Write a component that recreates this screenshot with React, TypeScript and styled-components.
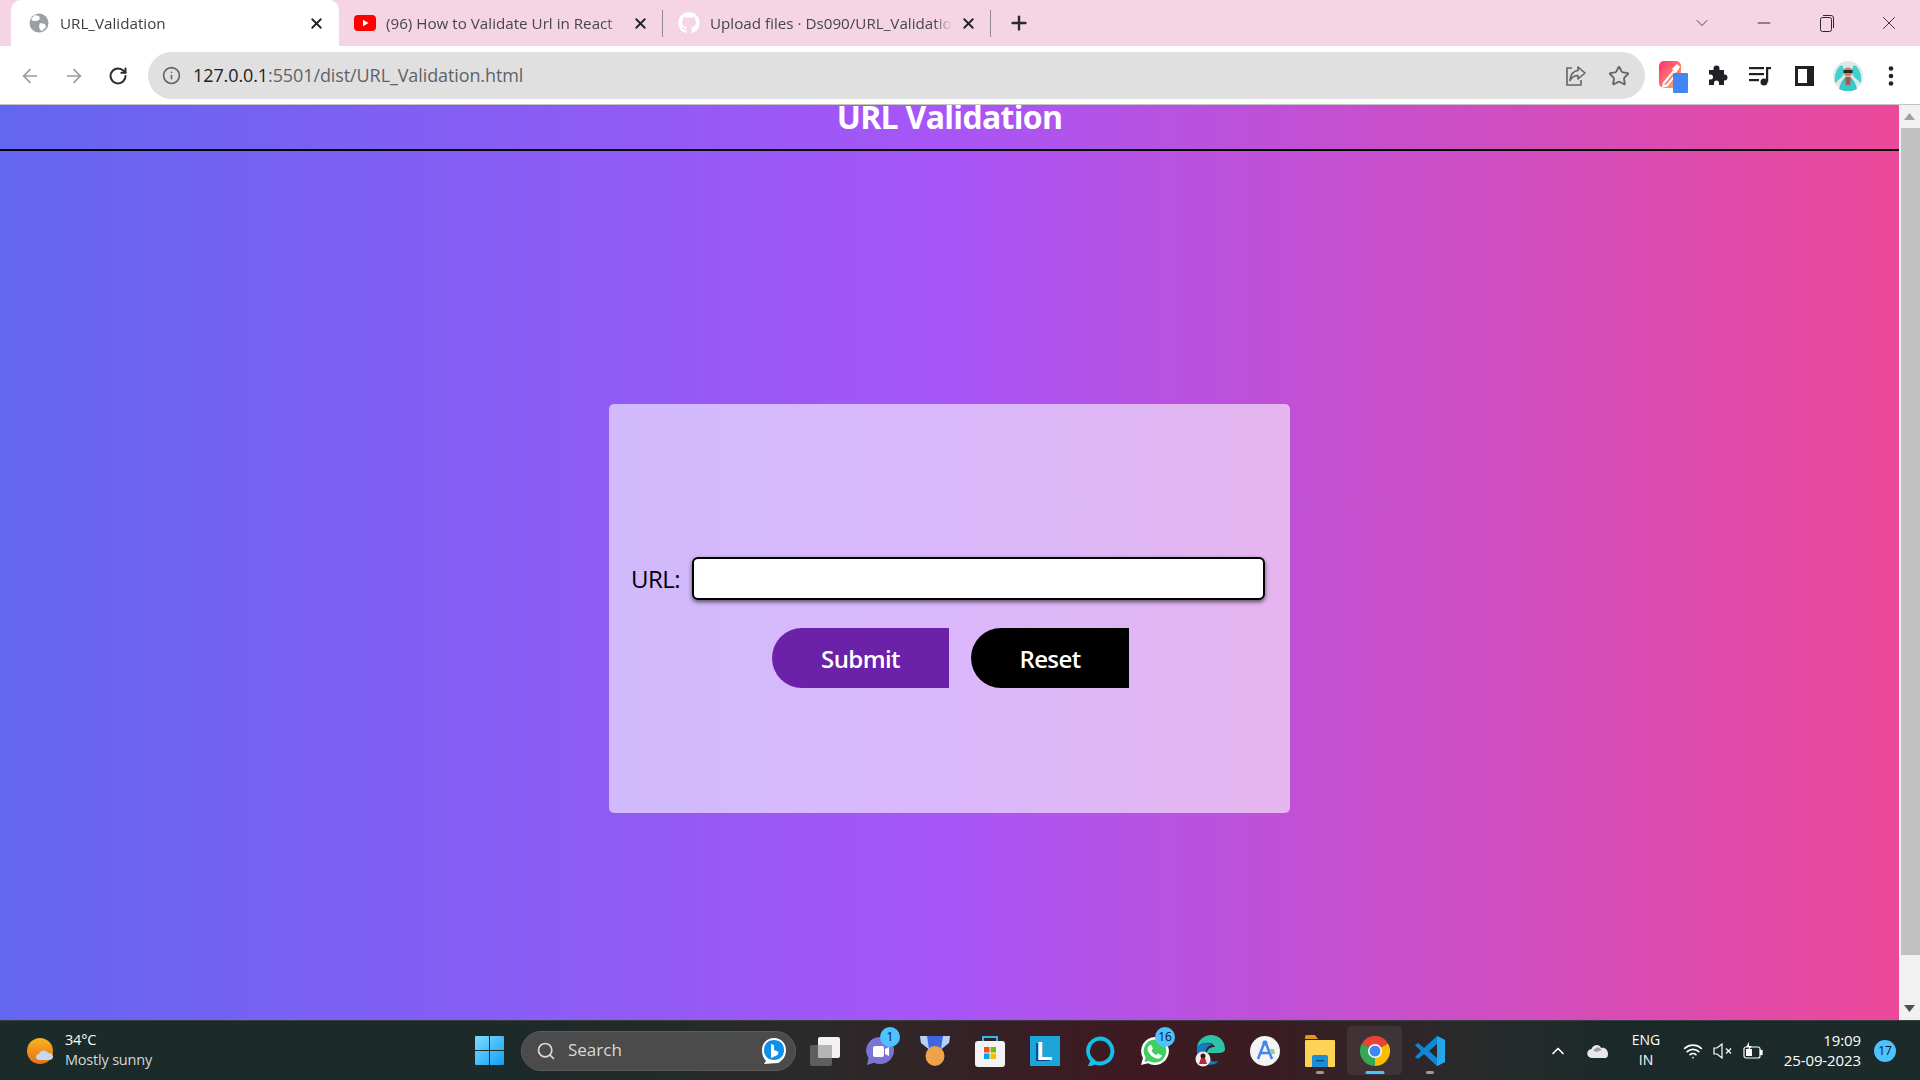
import React from "react";
import styled, { createGlobalStyle } from "styled-components";
import { ArrowLeft, ArrowRight, RotateCw, Info, Star, X, Plus, ChevronDown, ChevronUp, Minus, Search, Wifi } from "lucide-react";
import { FaGithub } from "react-icons/fa";

const UI_FONT = `"Open Sans", "Noto Sans", "Liberation Sans", sans-serif`;

const GlobalStyle = createGlobalStyle`
  html, body {
    margin: 0;
    padding: 0;
    height: 100%;
    overflow: hidden;
    font-family: ${UI_FONT};
  }
  * {
    box-sizing: border-box;
  }
`;

const Screen = styled.div`
  width: 1920px;
  height: 1080px;
  display: flex;
  flex-direction: column;
  overflow: hidden;
`;

/* browser chrome */
const TabStrip = styled.div`
  height: 46px;
  flex: none;
  background: #f5d5e3;
  display: flex;
  align-items: stretch;
  padding-left: 11px;
`;

const Tab = styled.div<{ $active?: boolean; $width: number; $sep?: boolean }>`
  width: ${(p) => p.$width}px;
  position: relative;
  display: flex;
  align-items: center;
  padding: 0 14px 0 ${(p) => (p.$active ? 17 : 15)}px;
  background: ${(p) => (p.$active ? "#fff" : "transparent")};
  border-radius: ${(p) => (p.$active ? "10px 10px 0 0" : "0")};
  color: ${(p) => (p.$active ? "#3c4043" : "#45474a")};

  ${(p) =>
    p.$sep &&
    `&::after {
      content: "";
      position: absolute;
      right: 0;
      top: 10px;
      height: 27px;
      width: 1px;
      background: #8f8a8d;
    }`}
`;

const TabIcon = styled.span`
  width: 22px;
  height: 22px;
  flex: none;
  display: flex;
  align-items: center;
  justify-content: center;
  margin-right: 10px;
`;

const TabTitle = styled.span`
  flex: 1;
  font-size: 15.2px;
  line-height: 20px;
  margin-top: -1px;
  white-space: nowrap;
  overflow: hidden;
  mask-image: linear-gradient(to right, #000 calc(100% - 18px), transparent);
`;

const TabClose = styled.span`
  flex: none;
  margin-left: 8px;
  display: flex;
  color: #202124;
`;

const NewTab = styled.span`
  display: flex;
  align-items: center;
  margin-left: 17px;
  color: #2b2b2b;
`;

const WindowControls = styled.div`
  margin-left: auto;
  display: flex;
  align-items: center;
  color: #2a2a2a;
`;

const WindowButton = styled.span<{ $width: number }>`
  width: ${(p) => p.$width}px;
  display: flex;
  justify-content: center;
`;

const Toolbar = styled.div`
  height: 59px;
  flex: none;
  background: #fff;
  border-bottom: 1px solid #c4c4c4;
  display: flex;
  align-items: flex-start;
  padding: 6px 0 0 18px;
`;

const NavButton = styled.span<{ $muted?: boolean; $gap?: number }>`
  width: 24px;
  height: 47px;
  display: flex;
  align-items: center;
  justify-content: center;
  margin-right: ${(p) => p.$gap ?? 20}px;
  color: ${(p) => (p.$muted ? "#9a9a9a" : "#2b2b2b")};
`;

const AddressBar = styled.div`
  width: 1497px;
  height: 47px;
  border-radius: 24px;
  background: #e0e0e0;
  display: flex;
  align-items: center;
  padding: 0 15px 0 14px;
  color: #5f6368;
`;

const Url = styled.div`
  flex: 1;
  margin-left: 12px;
  margin-top: -2px;
  font-size: 18px;
  letter-spacing: -0.1px;
  color: #5f6368;

  b {
    font-weight: 400;
    color: #202124;
  }
`;

const BarAction = styled.span<{ $gap?: number }>`
  display: flex;
  margin-left: ${(p) => p.$gap ?? 0}px;
  color: #646464;
`;

const Extensions = styled.div`
  display: flex;
  align-items: center;
  height: 47px;
  margin-left: 14px;
`;

const ExtensionSlot = styled.span<{ $width: number }>`
  width: ${(p) => p.$width}px;
  display: flex;
  justify-content: center;
  color: #202124;
`;

/* page */
const Viewport = styled.div`
  flex: 1;
  min-height: 0;
  display: flex;
`;

const Page = styled.main`
  flex: 1;
  min-width: 0;
  overflow: hidden;
  background: linear-gradient(to right, #6366f1, #a855f7, #ec4899);
`;

const PageHeader = styled.header`
  height: 46px;
  border-bottom: 2px solid #000;
  overflow: hidden;
`;

const Heading = styled.h1`
  margin: -8px 0 0;
  text-align: center;
  color: #fff;
  font-size: 32px;
  line-height: 40px;
  font-weight: 700;
  letter-spacing: -0.7px;
`;

const FormArea = styled.section`
  display: flex;
  justify-content: center;
  padding-top: 253px;
`;

const FormCard = styled.form`
  width: 681px;
  height: 409px;
  background: rgba(255, 255, 255, 0.58);
  border-radius: 5px;
  padding: 153px 25px 0 22px;
`;

const UrlRow = styled.div`
  display: flex;
  align-items: center;
  gap: 12px;
`;

const UrlLabel = styled.label`
  font-size: 24px;
  letter-spacing: -0.5px;
  color: #000;
`;

const UrlInput = styled.input`
  flex: 1;
  height: 43px;
  border: 2px solid #000;
  border-radius: 6px;
  background: #fff;
  box-shadow: 0 2px 4px rgba(0, 0, 0, 0.6);
  outline: none;
`;

const ButtonRow = styled.div`
  display: flex;
  gap: 22px;
  margin-top: 28px;
  padding-left: 141px;
`;

const ActionButton = styled.button<{ $bg: string; $width: number }>`
  width: ${(p) => p.$width}px;
  height: 60px;
  border: 0;
  border-radius: 30px 0 0 30px;
  background: ${(p) => p.$bg};
  color: #fff;
  font-family: ${UI_FONT};
  font-size: 24px;
  font-weight: 600;
  letter-spacing: -0.6px;
  cursor: pointer;
`;

const Scrollbar = styled.div`
  width: 21px;
  flex: none;
  background: #f1f1f1;
  display: flex;
  flex-direction: column;
`;

const ScrollArrow = styled.div`
  height: 23px;
  flex: none;
  display: flex;
  align-items: center;
  justify-content: center;

  svg {
    display: block;
  }
`;

const ScrollThumb = styled.div`
  height: 827px;
  margin-left: 2px;
  background: #c1c1c1;
`;

const ScrollTrack = styled.div`
  flex: 1;
`;

/* taskbar */
const Taskbar = styled.footer`
  height: 60px;
  flex: none;
  border-top: 1px solid #3a3f44;
  background: linear-gradient(
    to right,
    #1b2b29 0,
    #1c2a29 27%,
    #2a2a2a 42%,
    #3e1a22 58%,
    #3a1c22 66%,
    #2a2a2b 76%,
    #1b2a29 84%,
    #1b2b29 100%
  );
  display: flex;
  align-items: center;
  color: #fff;
`;

const Weather = styled.div`
  width: 464px;
  display: flex;
  align-items: center;
  padding-left: 27px;
  gap: 8px;
`;

const WeatherText = styled.div`
  font-size: 14.5px;
  line-height: 20px;
  letter-spacing: -0.2px;
  margin-top: -2px;

  small {
    display: block;
    font-size: 14.5px;
    color: #d3d8d7;
  }
`;

const StartButton = styled.span`
  width: 57px;
  display: flex;
  padding-left: 11px;
`;

const SearchBox = styled.div`
  width: 275px;
  height: 40px;
  border-radius: 20px;
  background: #4a4b4a;
  border: 1px solid #5b5c5b;
  display: flex;
  align-items: center;
  padding: 0 8px 0 14px;
  gap: 12px;
  color: #d9d9d9;
  font-size: 17px;
  margin-right: 1px;
`;

const SearchLabel = styled.span`
  flex: 1;
  margin-top: -2px;
`;

const AppIcons = styled.div`
  display: flex;
  align-items: center;
  height: 100%;
`;

const AppSlot = styled.span<{ $active?: boolean }>`
  width: 55px;
  height: 49px;
  position: relative;
  display: flex;
  align-items: center;
  justify-content: center;
  border-radius: 5px;
  background: ${(p) => (p.$active ? "rgba(255,255,255,0.07)" : "transparent")};
`;

const AppBadge = styled.span`
  position: absolute;
  top: 1px;
  right: 7px;
  min-width: 20px;
  height: 20px;
  border-radius: 10px;
  background: #4cc2ff;
  color: #111;
  font-size: 12px;
  line-height: 20px;
  text-align: center;
`;

const RunningDot = styled.span<{ $wide?: boolean }>`
  position: absolute;
  bottom: 1px;
  left: 50%;
  transform: translateX(-50%);
  width: ${(p) => (p.$wide ? 19 : 8)}px;
  height: 3px;
  border-radius: 2px;
  background: ${(p) => (p.$wide ? "#4cc2ff" : "#9a9a9a")};
`;

const Tray = styled.div`
  margin-left: auto;
  display: flex;
  align-items: center;
`;

const TrayIcon = styled.span<{ $width: number }>`
  width: ${(p) => p.$width}px;
  display: flex;
  justify-content: center;
`;

const Lang = styled.div`
  width: 62px;
  text-align: center;
  font-size: 14px;
  line-height: 20px;
  margin-top: -1px;
`;

const Clock = styled.div`
  width: 92px;
  text-align: right;
  font-size: 15px;
  line-height: 20px;
  letter-spacing: -0.1px;
  margin-top: -1px;
`;

const NotifyBadge = styled.span`
  width: 22px;
  height: 22px;
  margin: 0 24px 0 13px;
  border-radius: 50%;
  background: #4cc2ff;
  color: #111;
  font-size: 12px;
  line-height: 22px;
  text-align: center;
`;

/* drawn icons */
const GlobeIcon = () => (
  <svg width="20" height="20" viewBox="0 0 20 20">
    <circle cx="10" cy="10" r="9.5" fill="#9aa0a6" />
    <path d="M6 2l4 1 1 3-3 2-4 0-2-2zM11 10l5 1 1 3-4 4-2-1-1-4z" fill="#fff" />
  </svg>
);

const YoutubeIcon = () => (
  <svg width="22" height="16" viewBox="0 0 22 16">
    <rect width="22" height="16" rx="4" fill="#f00" />
    <path d="M9 4.7L14.6 8 9 11.3z" fill="#fff" />
  </svg>
);

const ShareIcon = () => (
  <svg width="22" height="22" viewBox="0 0 22 22" fill="none" stroke="currentColor" strokeWidth="1.6">
    <path d="M7 3H2v17h14v-5" />
    <path d="M13 2l7 6-7 6v-3.500c-4 0-6 1.500-8 5 .5-6 3-9.500 8-10z" strokeLinejoin="round" />
  </svg>
);

const DropperIcon = () => (
  <svg width="30" height="34" viewBox="0 0 30 34">
    <defs>
      <linearGradient id="dropper" x1="0" y1="0" x2="1" y2="1">
        <stop offset="0" stopColor="#ff2d6f" />
        <stop offset="1" stopColor="#ffb36b" />
      </linearGradient>
    </defs>
    <rect x="0" y="2" width="22" height="27" rx="5" fill="url(#dropper)" />
    <path d="M5 24l9-11 3 2.500-9 11-4 1z" fill="none" stroke="#fff" strokeWidth="2" />
    <path d="M13 10l5-5 3 3-4 6z" fill="#fff" />
    <rect x="14" y="14" width="15" height="20" rx="1" fill="#4285f4" />
  </svg>
);

const PuzzleIcon = () => (
  <svg width="21" height="21" viewBox="0 0 21 21" fill="#202124">
    <path d="M2 5h4.500V3.500a3 3 0 0 1 6 0V5H17v4.500h.5a3 3 0 0 1 0 6H17V20h-5v-2a2.500 2.500 0 0 0-5 0v2H2v-5.500h1.500a2.500 2.500 0 0 0 0-5H2z" />
  </svg>
);

const QueueIcon = () => (
  <svg width="22" height="22" viewBox="0 0 22 22" fill="#202124">
    <rect x="0" y="2" width="15" height="2.200" />
    <rect x="0" y="8" width="15" height="2.200" />
    <rect x="0" y="14" width="10" height="2.200" />
    <circle cx="15" cy="17" r="3.500" />
    <rect x="17" y="2" width="2.200" height="15" />
    <rect x="17" y="2" width="5" height="2.200" />
  </svg>
);

const SidePanelIcon = () => (
  <svg width="19" height="20" viewBox="0 0 19 20">
    <rect x="1.500" y="1.500" width="16" height="17" fill="#fff" stroke="#202124" strokeWidth="3" />
    <rect x="12" y="1" width="6" height="18" fill="#202124" />
  </svg>
);

const AvatarIcon = () => (
  <svg width="30" height="30" viewBox="0 0 30 30">
    <circle cx="15" cy="15" r="15" fill="#dfe8e6" />
    <path d="M2 22C1 14 4 6 9 4l3 6-3 6zM28 22c1-8-2-16-7-18l-3 6 3 6z" fill="#3fd0d0" />
    <path d="M6 28c2-8 5-12 9-12s7 4 9 12c-5 3-13 3-18 0z" fill="#37c8c8" />
    <circle cx="15" cy="11" r="4.500" fill="#c77f66" />
    <rect x="10.500" y="9" width="9" height="3" fill="#2a2a2a" />
    <path d="M12 16h6l-1 8h-4z" fill="#b0574c" />
  </svg>
);

const MenuDots = () => (
  <svg width="6" height="22" viewBox="0 0 6 22" fill="#202124">
    <circle cx="3" cy="3.500" r="2.300" />
    <circle cx="3" cy="11" r="2.300" />
    <circle cx="3" cy="18.500" r="2.300" />
  </svg>
);

const RestoreIcon = () => (
  <svg width="14" height="17" viewBox="0 0 14 17" fill="none" stroke="currentColor" strokeWidth="1">
    <rect x="0.500" y="2.500" width="11" height="14" rx="2" />
    <path d="M3 0.500h8a2.500 2.500 0 0 1 2.500 2.500v10" />
  </svg>
);

const SunCloudIcon = () => (
  <svg width="30" height="30" viewBox="0 0 30 30">
    <defs>
      <linearGradient id="sun" x1="0" y1="0" x2="0" y2="1">
        <stop offset="0" stopColor="#f7b422" />
        <stop offset="1" stopColor="#ea6f14" />
      </linearGradient>
    </defs>
    <circle cx="13" cy="15" r="13" fill="url(#sun)" />
    <path d="M12 24c-4 0-4-6 0-6 1-4 7-5 9-1 6-1 7 7 1 7z" fill="#c6d7f2" />
  </svg>
);

const WindowsIcon = () => (
  <svg width="29" height="29" viewBox="0 0 29 29">
    <defs>
      <linearGradient id="win" x1="0" y1="0" x2="1" y2="1">
        <stop offset="0" stopColor="#7fdcff" />
        <stop offset="1" stopColor="#0f9ff5" />
      </linearGradient>
    </defs>
    <path d="M0 1a1 1 0 0 1 1-1h13v14H0zM15 0h13a1 1 0 0 1 1 1v13H15zM0 15h14v14H1a1 1 0 0 1-1-1zM15 15h14v13a1 1 0 0 1-1 1H15z" fill="url(#win)" />
  </svg>
);

const BingIcon = () => (
  <svg width="26" height="28" viewBox="0 0 26 28">
    <path d="M13 1c7 0 12 5 12 12s-4 11-8 13l-14 1 2-3C2 21 1 17 1 13 1 6 6 1 13 1z" fill="#fff" />
    <path d="M13 3c6 0 10 4 10 10s-4 10-10 10S3 19 3 13 7 3 13 3z" fill="#0f8fe8" />
    <path d="M10 7l3 1v5l4 1.500c1 1.500 0 4-2.500 4.500L10 21z" fill="#fff" />
  </svg>
);

const TaskViewIcon = () => (
  <svg width="30" height="30" viewBox="0 0 30 30">
    <rect x="0" y="9" width="22" height="21" rx="2" fill="#5e5e5e" />
    <rect x="8" y="1" width="22" height="21" rx="2" fill="#f2f2f2" />
    <rect x="8" y="9" width="14" height="13" fill="#b5b5b5" />
  </svg>
);

const ChatIcon = () => (
  <svg width="30" height="30" viewBox="0 0 30 30">
    <path d="M15 1a14 13.500 0 1 1-6 25.700L2 29l1.500-7A14 13.500 0 0 1 15 1z" fill="#7b74d6" />
    <rect x="8" y="10" width="11" height="11" rx="2" fill="#fff" />
    <path d="M20 13l4-2v9l-4-2z" fill="#fff" />
  </svg>
);

const MedalIcon = () => (
  <svg width="30" height="30" viewBox="0 0 30 30">
    <path d="M0 0h30l-1 7-7 6H8L1 7z" fill="#3f68e0" />
    <path d="M0 0h7l2 13-8-6zM30 0h-7l-2 13 8-6z" fill="#b9d0f5" />
    <ellipse cx="15" cy="20" rx="9.500" ry="10" fill="#f0a24a" />
  </svg>
);

const StoreIcon = () => (
  <svg width="30" height="32" viewBox="0 0 30 32">
    <path d="M8 6V2h14v4" fill="none" stroke="#35b6e8" strokeWidth="2" />
    <rect x="0" y="6" width="30" height="26" rx="3" fill="#f3f3f3" />
    <rect x="9" y="12" width="5.500" height="5.500" fill="#f25022" />
    <rect x="15.500" y="12" width="5.500" height="5.500" fill="#7fba00" />
    <rect x="9" y="18.500" width="5.500" height="5.500" fill="#00a4ef" />
    <rect x="15.500" y="18.500" width="5.500" height="5.500" fill="#ffb900" />
  </svg>
);

const LetterTile = styled.span`
  width: 30px;
  height: 30px;
  background: #1ba5d8;
  color: #fff;
  font-family: "Liberation Sans", sans-serif;
  font-size: 26px;
  font-weight: 700;
  line-height: 30px;
  text-align: center;
  text-shadow: -2px 1px 0 #123a8c;
`;

const AlexaIcon = () => (
  <svg width="30" height="30" viewBox="0 0 30 30">
    <path d="M15 2.500a12.500 12.500 0 1 1-5 24l-4 1.500 1.500-3.500A12.500 12.500 0 0 1 15 2.500z" fill="none" stroke="#13bfe6" strokeWidth="4" />
  </svg>
);

const WhatsappIcon = () => (
  <svg width="30" height="32" viewBox="0 0 30 32">
    <path d="M15 2a14 14 0 1 1-7 26.200L1 30l2-7A14 14 0 0 1 15 2z" fill="#fff" />
    <path d="M15 4.500a11.500 11.500 0 1 1-6 21.400L4.500 27l1.200-4.500A11.500 11.500 0 0 1 15 4.500z" fill="#3fcf5f" />
    <path d="M11 9.500l2 4-1.500 2c1 2 2.500 3.500 4.500 4.500l2-1.500 4 2c-.5 2.500-3 3.500-5 3-5-1-8.500-5-9.500-9 0-2.500 1.500-4.500 3.500-5z" fill="#fff" />
  </svg>
);

const EdgeIcon = () => (
  <svg width="30" height="32" viewBox="0 0 30 32">
    <path d="M2 12C3 5 9 0 16 0c8 0 14 6 14 14 0 3-3 4-7 4H12c0-5 5-6 8-6-2-5-12-6-18 0z" fill="#2bc3a8" />
    <path d="M2 12c4-5 12-5 15-2-5 1-7 5-6 9 1 6 7 9 13 7-3 4-10 5-15 2-5-3-8-9-7-16z" fill="#0f7cc4" />
    <circle cx="8" cy="24" r="7.500" fill="#f3ece4" />
    <circle cx="8" cy="21" r="2.500" fill="#222" />
    <path d="M4 29l2-6h4l2 6z" fill="#b52a38" />
  </svg>
);

const AndroidStudioIcon = () => (
  <svg width="30" height="30" viewBox="0 0 30 30">
    <circle cx="15" cy="15" r="15" fill="#f4f4f4" />
    <path d="M15 5l-7 18M15 5l7 18M10 17h10" fill="none" stroke="#4285f4" strokeWidth="2.500" />
    <circle cx="15" cy="7" r="2.500" fill="#4285f4" />
    <path d="M20 13h4l1 5h-4z" fill="#8fcf9f" />
  </svg>
);

const FolderIcon = () => (
  <svg width="30" height="32" viewBox="0 0 30 32">
    <path d="M0 2a2 2 0 0 1 2-2h8l3 4H0z" fill="#d99c12" />
    <rect x="0" y="5" width="30" height="27" rx="1" fill="#fcd354" />
    <path d="M7 22a2 2 0 0 1 2-2h12a2 2 0 0 1 2 2v10H7z" fill="#1a8dd6" />
    <rect x="11" y="25" width="8" height="1.500" fill="#0b4f80" />
  </svg>
);

const ChromeIcon = () => (
  <svg width="30" height="30" viewBox="0 0 30 30">
    <path d="M15 15L2 7.500A15 15 0 0 1 28 7.500z" fill="#ea4335" />
    <path d="M15 15L28 7.500A15 15 0 0 1 15 30z" fill="#fbbc04" />
    <path d="M15 15L15 30A15 15 0 0 1 2 7.500z" fill="#34a853" />
    <circle cx="15" cy="15" r="7" fill="#fff" />
    <circle cx="15" cy="15" r="5.500" fill="#4285f4" />
  </svg>
);

const VsCodeIcon = () => (
  <svg width="32" height="32" viewBox="0 0 32 32">
    <path d="M23 1l8 4v22l-8 4-13-12-6 5-3-2 6-6-6-6 3-2 6 5zM23 9l-8 7 8 7z" fill="#0f87d4" />
    <path d="M23 1l8 4v22l-8 4z" fill="#25a6ea" />
  </svg>
);

const CloudIcon = () => (
  <svg width="21" height="14" viewBox="0 0 21 14">
    <path d="M5 14a4.500 4.500 0 0 1-.5-9C6 1 12-1 14 4c4-1 7 2 7 6s-2 4-4 4z" fill="#e8e8e8" />
    <path d="M6 6l5-3 4 3-6 2z" fill="#9d9d9d" />
  </svg>
);

const MutedIcon = () => (
  <svg width="20" height="16" viewBox="0 0 20 16" fill="none" stroke="#fff" strokeWidth="1.200">
    <path d="M1 5h3l5-4v14l-5-4H1z" />
    <path d="M13 5.500l5 5M18 5.500l-5 5" />
  </svg>
);

const BatteryIcon = () => (
  <svg width="20" height="18" viewBox="0 0 20 18" fill="none" stroke="#fff" strokeWidth="1.200">
    <rect x="1" y="5" width="16" height="11" rx="2" />
    <rect x="17.500" y="8.500" width="1.500" height="4" fill="#fff" />
    <path d="M3 7h6v7H3z" fill="#fff" stroke="none" />
    <path d="M6 0L3 5h3l-1 4 4-5H6z" fill="#fff" stroke="none" />
  </svg>
);

const tabs = [
  { title: "URL_Validation", width: 328, active: true, icon: <GlobeIcon /> },
  { title: "(96) How to Validate Url in React", width: 324, sep: true, icon: <YoutubeIcon /> },
  {
    title: "Upload files · Ds090/URL_Validation",
    width: 328,
    sep: true,
    icon: <FaGithub size={22} color="#fff" />,
  },
];

const apps: { icon: React.ReactNode; badge?: string; dot?: boolean; active?: boolean }[] = [
  { icon: <TaskViewIcon /> },
  { icon: <ChatIcon />, badge: "1" },
  { icon: <MedalIcon /> },
  { icon: <StoreIcon /> },
  { icon: <LetterTile>L</LetterTile> },
  { icon: <AlexaIcon /> },
  { icon: <WhatsappIcon />, badge: "16" },
  { icon: <EdgeIcon /> },
  { icon: <AndroidStudioIcon /> },
  { icon: <FolderIcon />, dot: true },
  { icon: <ChromeIcon />, active: true },
  { icon: <VsCodeIcon />, dot: true },
];

const App = () => (
  <Screen>
    <GlobalStyle />
    <TabStrip>
      {tabs.map((tab) => (
        <Tab key={tab.title} $active={tab.active} $width={tab.width} $sep={tab.sep}>
          <TabIcon>{tab.icon}</TabIcon>
          <TabTitle>{tab.title}</TabTitle>
          <TabClose>
            <X size={17} strokeWidth={2.6} />
          </TabClose>
        </Tab>
      ))}
      <NewTab>
        <Plus size={22} strokeWidth={2.6} />
      </NewTab>
      <WindowControls>
        <WindowButton $width={62}>
          <ChevronDown size={20} strokeWidth={1} />
        </WindowButton>
        <WindowButton $width={62}>
          <Minus size={20} strokeWidth={1.4} />
        </WindowButton>
        <WindowButton $width={63}>
          <RestoreIcon />
        </WindowButton>
        <WindowButton $width={62}>
          <X size={22} strokeWidth={1} />
        </WindowButton>
      </WindowControls>
    </TabStrip>

    <Toolbar>
      <NavButton $muted>
        <ArrowLeft size={22} strokeWidth={1.8} />
      </NavButton>
      <NavButton $muted>
        <ArrowRight size={22} strokeWidth={1.8} />
      </NavButton>
      <NavButton $gap={18}>
        <RotateCw size={20} strokeWidth={2.4} />
      </NavButton>
      <AddressBar>
        <Info size={19} strokeWidth={2} />
        <Url>
          <b>127.0.0.1</b>:5501/dist/URL_Validation.html
        </Url>
        <BarAction>
          <ShareIcon />
        </BarAction>
        <BarAction $gap={21}>
          <Star size={22} strokeWidth={2} />
        </BarAction>
      </AddressBar>
      <Extensions>
        <ExtensionSlot $width={30}>
          <DropperIcon />
        </ExtensionSlot>
        <ExtensionSlot $width={56}>
          <PuzzleIcon />
        </ExtensionSlot>
        <ExtensionSlot $width={30}>
          <QueueIcon />
        </ExtensionSlot>
        <ExtensionSlot $width={58}>
          <SidePanelIcon />
        </ExtensionSlot>
        <ExtensionSlot $width={30}>
          <AvatarIcon />
        </ExtensionSlot>
        <ExtensionSlot $width={56}>
          <MenuDots />
        </ExtensionSlot>
      </Extensions>
    </Toolbar>

    <Viewport>
      <Page>
        <PageHeader>
          <Heading>URL Validation</Heading>
        </PageHeader>
        <FormArea>
          <FormCard onSubmit={(e) => e.preventDefault()}>
            <UrlRow>
              <UrlLabel htmlFor="url">URL:</UrlLabel>
              <UrlInput id="url" type="text" />
            </UrlRow>
            <ButtonRow>
              <ActionButton $bg="#6b21a8" $width={177} type="submit">
                Submit
              </ActionButton>
              <ActionButton $bg="#000" $width={158} type="reset">
                Reset
              </ActionButton>
            </ButtonRow>
          </FormCard>
        </FormArea>
      </Page>
      <Scrollbar>
        <ScrollArrow>
          <svg width="11" height="7" viewBox="0 0 11 7">
            <path d="M5.500 0L11 7H0z" fill="#a0a0a0" />
          </svg>
        </ScrollArrow>
        <ScrollThumb />
        <ScrollTrack />
        <ScrollArrow>
          <svg width="11" height="7" viewBox="0 0 11 7">
            <path d="M0 0h11L5.500 7z" fill="#505050" />
          </svg>
        </ScrollArrow>
      </Scrollbar>
    </Viewport>

    <Taskbar>
      <Weather>
        <SunCloudIcon />
        <WeatherText>
          34°C
          <small>Mostly sunny</small>
        </WeatherText>
      </Weather>
      <StartButton>
        <WindowsIcon />
      </StartButton>
      <SearchBox>
        <Search size={20} strokeWidth={2} />
        <SearchLabel>Search</SearchLabel>
        <BingIcon />
      </SearchBox>
      <AppIcons>
        {apps.map((app, i) => (
          <AppSlot key={i} $active={app.active}>
            {app.icon}
            {app.badge && <AppBadge>{app.badge}</AppBadge>}
            {app.dot && <RunningDot />}
            {app.active && <RunningDot $wide />}
          </AppSlot>
        ))}
      </AppIcons>
      <Tray>
        <TrayIcon $width={42}>
          <ChevronUp size={20} strokeWidth={2} />
        </TrayIcon>
        <TrayIcon $width={36}>
          <CloudIcon />
        </TrayIcon>
        <Lang>
          ENG
          <br />
          IN
        </Lang>
        <TrayIcon $width={32}>
          <Wifi size={20} strokeWidth={2} />
        </TrayIcon>
        <TrayIcon $width={28}>
          <MutedIcon />
        </TrayIcon>
        <TrayIcon $width={32}>
          <BatteryIcon />
        </TrayIcon>
        <Clock>
          19:09
          <br />
          25-09-2023
        </Clock>
        <NotifyBadge>17</NotifyBadge>
      </Tray>
    </Taskbar>
  </Screen>
);

export default App;
